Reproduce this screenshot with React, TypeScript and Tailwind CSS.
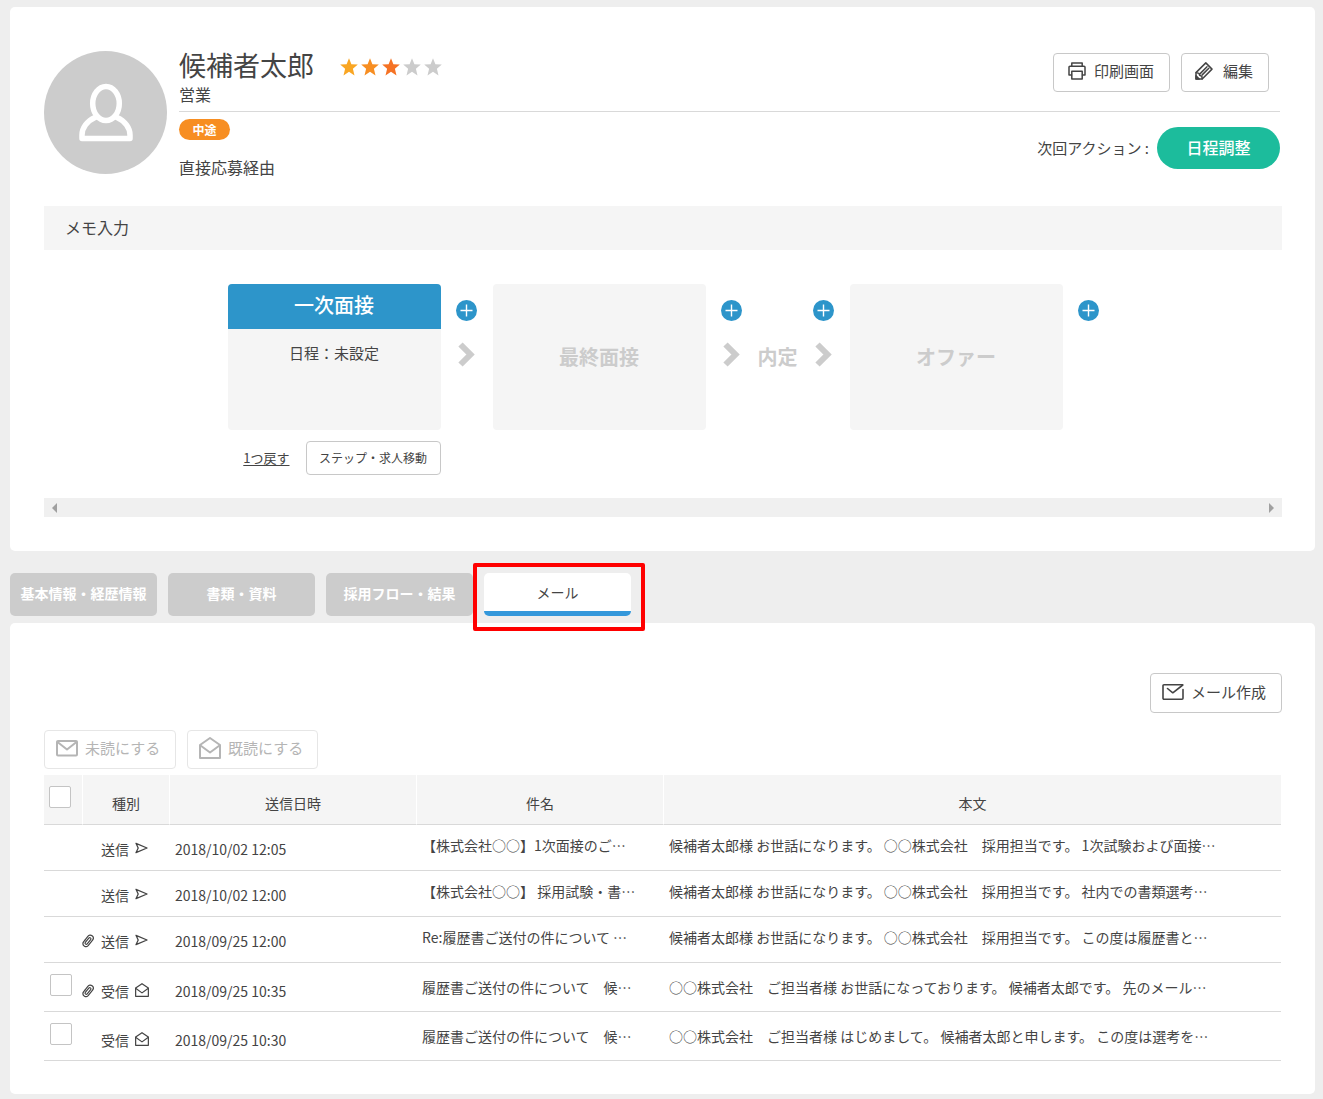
import React from "react";

type IconProps = { className?: string };

const line = {
  fill: "none",
  stroke: "currentColor",
  strokeWidth: 2,
  strokeLinecap: "round" as const,
  strokeLinejoin: "round" as const,
};

function PersonIcon() {
  return (
    <svg viewBox="0 0 54 60" className="h-[60px] w-[54px]" fill="none" stroke="#fff" strokeWidth="5.5" strokeLinejoin="round" strokeLinecap="round" aria-hidden="true">
      <ellipse cx="27" cy="20.5" rx="13.3" ry="17" />
      <path d="M16 34.5C8 38 3 45 3 52V55.5H51V52C51 45 46 38 38 34.5" />
    </svg>
  );
}

function Star({ color }: { color: string }) {
  return (
    <svg viewBox="0 0 18 18" className="h-[18px] w-[18px]" fill={color} aria-hidden="true">
      <path d="M9 .3 11.4 6.2 17.8 6.6 12.9 10.7 14.5 17.4 9 13.8 3.5 17.4 5.1 10.7.2 6.6 6.6 6.2Z" />
    </svg>
  );
}

function PrinterIcon({ className }: IconProps) {
  return (
    <svg viewBox="0 0 18 18" className={className} {...line} strokeWidth={1.5} aria-hidden="true">
      <path d="M3.8 4V1H14.2V4" />
      <path d="M3.5 13H1V5.2A1 1 0 0 1 2 4.2H16A1 1 0 0 1 17 5.2V13H14.5" />
      <path d="M3.8 9.2H14.2V17H3.8Z" />
    </svg>
  );
}

function PencilIcon({ className }: IconProps) {
  return (
    <svg viewBox="0 0 18 18" className={className} {...line} strokeWidth={1.5} aria-hidden="true">
      <path d="M1 17V10.6L10.8 .9 17 7.1 7.2 17Z" />
      <path d="M1.2 10.6 4 11.4 4.8 13.4 6.8 14.2 7.2 16.8" />
      <path d="M5.2 11.6 12 4.8M7.2 12.9 13.8 6.3" />
      <path d="M1 17V13.8L4.2 17Z" fill="currentColor" />
    </svg>
  );
}

function MailIcon({ className }: IconProps) {
  return (
    <svg viewBox="0 0 22 18" className={className} {...line} aria-hidden="true">
      <rect x="1" y="2" width="20" height="14.5" rx="1" />
      <path d="M1.5 3 11 10.5 20.5 3" />
    </svg>
  );
}

function ComposeIcon({ className }: IconProps) {
  return (
    <svg viewBox="0 0 22 18" className={className} {...line} strokeWidth={1.6} aria-hidden="true">
      <path d="M20.5 1.8H2A1 1 0 0 0 1 2.8V15.2A1 1 0 0 0 2 16.2H20A1 1 0 0 0 21 15.2V6.5" />
      <path d="M5.5 5.5 10.8 9.8 20.8 2" />
    </svg>
  );
}

function OpenMailIcon({ className, thin }: IconProps & { thin?: boolean }) {
  return (
    <svg viewBox="0 0 22 22" className={className} {...line} strokeWidth={thin ? 1.9 : 2} aria-hidden="true">
      <path d="M1 8 11 1 21 8V21H1Z" />
      <path d="M1.5 8.5 11 15.5 20.5 8.5" />
    </svg>
  );
}

function SendIcon() {
  return (
    <svg viewBox="0 0 13 12" className="h-3 w-[13px]" {...line} strokeWidth={1.3} aria-hidden="true">
      <path d="M1 1.3 12 6 1 10.7 3.2 6Z" />
    </svg>
  );
}

function ClipIcon() {
  return (
    <svg viewBox="0 0 12 14" className="h-[14px] w-3" {...line} strokeWidth={1.2} aria-hidden="true">
      <g transform="rotate(38 6 7)">
        <path d="M3 8.5V3.4A3 3 0 0 1 9 3.4V10.6A3 3 0 0 1 3.2 11.4" />
        <path d="M3 8.5V11M7.2 4.6V9.8A1.2 1.2 0 0 1 4.8 9.8V4.2A1.2 1.2 0 0 1 7.2 4.2" />
      </g>
    </svg>
  );
}

function AddStep() {
  return (
    <button type="button" aria-label="ステップを追加" className="flex size-[21px] items-center justify-center rounded-full bg-[#2d95ca] text-white">
      <svg viewBox="0 0 13 13" className="size-[13px]" stroke="currentColor" strokeWidth="1.4" aria-hidden="true">
        <path d="M6.5 .5V12.5M.5 6.5H12.5" />
      </svg>
    </button>
  );
}

function Connector({ arrow = true }: { arrow?: boolean }) {
  return (
    <div className="flex w-5 shrink-0 flex-col items-center gap-[21px] pt-4">
      <AddStep />
      {arrow && (
        <svg viewBox="0 0 17 25" className="h-[25px] w-[17px]" fill="none" stroke="#ccc" strokeWidth="6" aria-hidden="true">
          <path d="M2.5 2.5 12.5 12.5 2.5 22.5" />
        </svg>
      )}
    </div>
  );
}

const outline = "flex items-center rounded-[4px] border border-[#c8c8c8] bg-white pb-[3px] text-[15px] leading-5";
const muted = "flex h-[39px] items-center gap-[7px] rounded-[4px] border border-[#e6e6e6] pb-[3px] pl-[11px] text-[15px] text-[#b5b5b5]";
const check = "block size-[22px] appearance-none rounded-[2px] border border-[#c4c4c4] bg-white checked:bg-[#2d95ca]";

type Mail = { received?: boolean; clip?: boolean; date: string; subject: string; body: string };

const mails: Mail[] = [
  { date: "2018/10/02 12:05", subject: "【株式会社○○】1次面接のご…", body: "候補者太郎様 お世話になります。 ○○株式会社　採用担当です。 1次試験および面接…" },
  { date: "2018/10/02 12:00", subject: "【株式会社○○】 採用試験・書…", body: "候補者太郎様 お世話になります。 ○○株式会社　採用担当です。 社内での書類選考…" },
  { clip: true, date: "2018/09/25 12:00", subject: "Re:履歴書ご送付の件について …", body: "候補者太郎様 お世話になります。 ○○株式会社　採用担当です。 この度は履歴書と…" },
  { received: true, clip: true, date: "2018/09/25 10:35", subject: "履歴書ご送付の件について　候…", body: "○○株式会社　ご担当者様 お世話になっております。 候補者太郎です。 先のメール…" },
  { received: true, date: "2018/09/25 10:30", subject: "履歴書ご送付の件について　候…", body: "○○株式会社　ご担当者様 はじめまして。 候補者太郎と申します。 この度は選考を…" },
];

const stars = ["#f9a623", "#f78e22", "#f57224", "#ccc", "#ccc"];
const tabs = ["基本情報・経歴情報", "書類・資料", "採用フロー・結果"];

function Profile() {
  return (
    <header className="flex gap-3 pr-0.5">
      <div className="flex size-[123px] shrink-0 items-center justify-center rounded-full bg-[#ccc]">
        <PersonIcon />
      </div>
      <div className="min-w-0 flex-1">
        <div className="flex h-[61px] justify-between border-b border-[#d9d9d9]">
          <div>
            <div className="flex items-center gap-[26px]">
              <h1 className="text-[27px] leading-7">候補者太郎</h1>
              <div className="flex gap-[3px] pt-1" role="img" aria-label="評価 3 / 5">
                {stars.map((c, i) => <Star key={i} color={c} />)}
              </div>
            </div>
            <p className="text-base leading-[30px]">営業</p>
          </div>
          <div className="flex items-start gap-[11px] pt-0.5 pr-[11px]">
            <button type="button" className={`${outline} h-[39px] gap-2 pr-[15px] pl-[14px]`}>
              <PrinterIcon className="size-[18px]" />
              印刷画面
            </button>
            <button type="button" className={`${outline} h-[39px] gap-2.5 pr-[15px] pl-[13px]`}>
              <PencilIcon className="size-[18px]" />
              編集
            </button>
          </div>
        </div>
        <div className="flex items-start justify-between">
          <div className="pt-[7px]">
            <span className="flex h-[21px] w-[51px] items-center justify-center rounded-full bg-[#f78e22] text-xs font-bold text-white">中途</span>
            <p className="mt-[15px] text-base leading-6">直接応募経由</p>
          </div>
          <div className="flex items-center gap-2 pt-[15px]">
            <span className="text-[15px]">次回アクション :</span>
            <button type="button" className="h-[42px] w-[123px] rounded-full bg-[#1cbc9c] pb-0.5 text-base font-medium text-white">日程調整</button>
          </div>
        </div>
      </div>
    </header>
  );
}

function Flow() {
  return (
    <div className="mt-[34px] flex justify-center gap-4">
      <div className="w-[213px] shrink-0">
        <div className="h-[146px] overflow-hidden rounded-[4px] bg-[#f5f5f5] text-center">
          <h2 className="h-[45px] bg-[#2d95ca] text-xl leading-[41px] font-medium text-white">一次面接</h2>
          <p className="pt-3 text-[15px] leading-6">日程：未設定</p>
        </div>
        <div className="mt-[11px] flex items-center justify-end gap-4">
          <a href="#back" className="text-[13px] underline underline-offset-2">1つ戻す</a>
          <button type="button" className="h-[34px] w-[135px] rounded-[4px] border border-[#c8c8c8] text-xs">ステップ・求人移動</button>
        </div>
      </div>
      <Connector />
      <div className="flex h-[146px] w-[213px] shrink-0 items-center justify-center rounded-[4px] bg-[#f5f5f5] text-xl font-bold text-[#ccc]">最終面接</div>
      <Connector />
      <div className="flex h-[146px] items-center text-xl font-bold text-[#ccc]">内定</div>
      <Connector />
      <div className="flex h-[146px] w-[213px] shrink-0 items-center justify-center rounded-[4px] bg-[#f5f5f5] text-xl font-bold text-[#ccc]">オファー</div>
      <Connector arrow={false} />
    </div>
  );
}

function MailTable() {
  const th = "border-b border-l border-b-[#d9d9d9] border-l-white pt-1.5 font-normal";
  return (
    <div className="pr-px">
      <table className="mt-1.5 w-full table-fixed border-separate border-spacing-0 text-sm">
        <colgroup>
          <col className="w-[38px]" />
          <col className="w-[87px]" />
          <col className="w-[247px]" />
          <col className="w-[247px]" />
          <col />
        </colgroup>
        <thead>
          <tr className="h-[50px] bg-[#f5f5f5]">
            <th className="border-b border-[#d9d9d9] pb-1.5 pl-[5px]">
              <input type="checkbox" aria-label="すべて選択" className={check} />
            </th>
            <th className={th}>種別</th>
            <th className={th}>送信日時</th>
            <th className={th}>件名</th>
            <th className={th}>本文</th>
          </tr>
        </thead>
        <tbody>
          {mails.map((m) => {
            const low = m.received ? "pt-[7px]" : "pt-[3px]";
            const high = m.received ? "pb-0" : "pb-1.5";
            return (
              <tr key={m.date} className={`${m.received ? "h-[49px]" : "h-[46px]"} *:border-b *:border-[#d9d9d9]`}>
                <td className="pb-1 pl-1.5">
                  {m.received && <input type="checkbox" aria-label={m.date} className={check} />}
                </td>
                <td className={low}>
                  <div className="flex items-center">
                    <span className="flex w-[19px]">{m.clip && <ClipIcon />}</span>
                    <span className="mr-1.5">{m.received ? "受信" : "送信"}</span>
                    <span className="pb-0.5">{m.received ? <OpenMailIcon thin className="size-[14px]" /> : <SendIcon />}</span>
                  </div>
                </td>
                <td className={`${low} pl-1.5`}>{m.date}</td>
                <td className={`truncate pl-1.5 ${high}`}>{m.subject}</td>
                <td className={`truncate pl-1.5 ${high}`}>{m.body}</td>
              </tr>
            );
          })}
        </tbody>
      </table>
    </div>
  );
}

export default function App() {
  return (
    <div className="min-h-screen bg-[#eee] pt-[7px] pr-2 pb-[5px] pl-2.5 font-['Noto_Sans_CJK_JP',sans-serif] text-[#444]" lang="ja">
      <section className="rounded-[5px] bg-white pt-11 pr-[33px] pb-[34px] pl-[34px]">
        <Profile />
        <button type="button" className="mt-[27px] block h-11 w-full bg-[#f5f5f5] px-[21px] pb-0.5 text-left text-base">メモ入力</button>
        <Flow />
        <div className="mt-[23px] flex h-[19px] items-center justify-between bg-[#f0f0f0] px-2" aria-hidden="true">
          <svg viewBox="0 0 5 10" className="h-2.5 w-[5px]" fill="#a0a0a0"><path d="M5 0V10L0 5Z" /></svg>
          <svg viewBox="0 0 5 10" className="h-2.5 w-[5px]" fill="#a0a0a0"><path d="M0 0V10L5 5Z" /></svg>
        </div>
      </section>

      <nav className="mt-[22px] flex gap-[11px] text-sm">
        {tabs.map((t) => (
          <button key={t} type="button" className="h-[43px] w-[147px] rounded-[5px] bg-[#ccc] pb-1 font-bold text-white">{t}</button>
        ))}
        <div className="relative">
          <button type="button" className="h-[43px] w-[147px] rounded-[5px] border-b-[5px] border-[#3498db] bg-white">メール</button>
          <div className="pointer-events-none absolute -top-2.5 -right-3.5 -bottom-[15px] -left-[11px] rounded-[2px] border-4 border-[#f00]" />
        </div>
      </nav>

      <section className="mt-[7px] rounded-[5px] bg-white pt-[50px] pr-[33px] pb-[33px] pl-[34px]">
        <div className="flex justify-end">
          <button type="button" className={`${outline} h-10 w-[132px] gap-[7px] pl-[11px]`}>
            <ComposeIcon className="h-[18px] w-[22px]" />
            メール作成
          </button>
        </div>
        <div className="mt-[17px] flex gap-[11px]">
          <button type="button" disabled className={`${muted} w-[132px]`}>
            <MailIcon className="h-[18px] w-[22px]" />
            未読にする
          </button>
          <button type="button" disabled className={`${muted} w-[131px]`}>
            <OpenMailIcon className="size-[22px]" />
            既読にする
          </button>
        </div>
        <MailTable />
      </section>
    </div>
  );
}
